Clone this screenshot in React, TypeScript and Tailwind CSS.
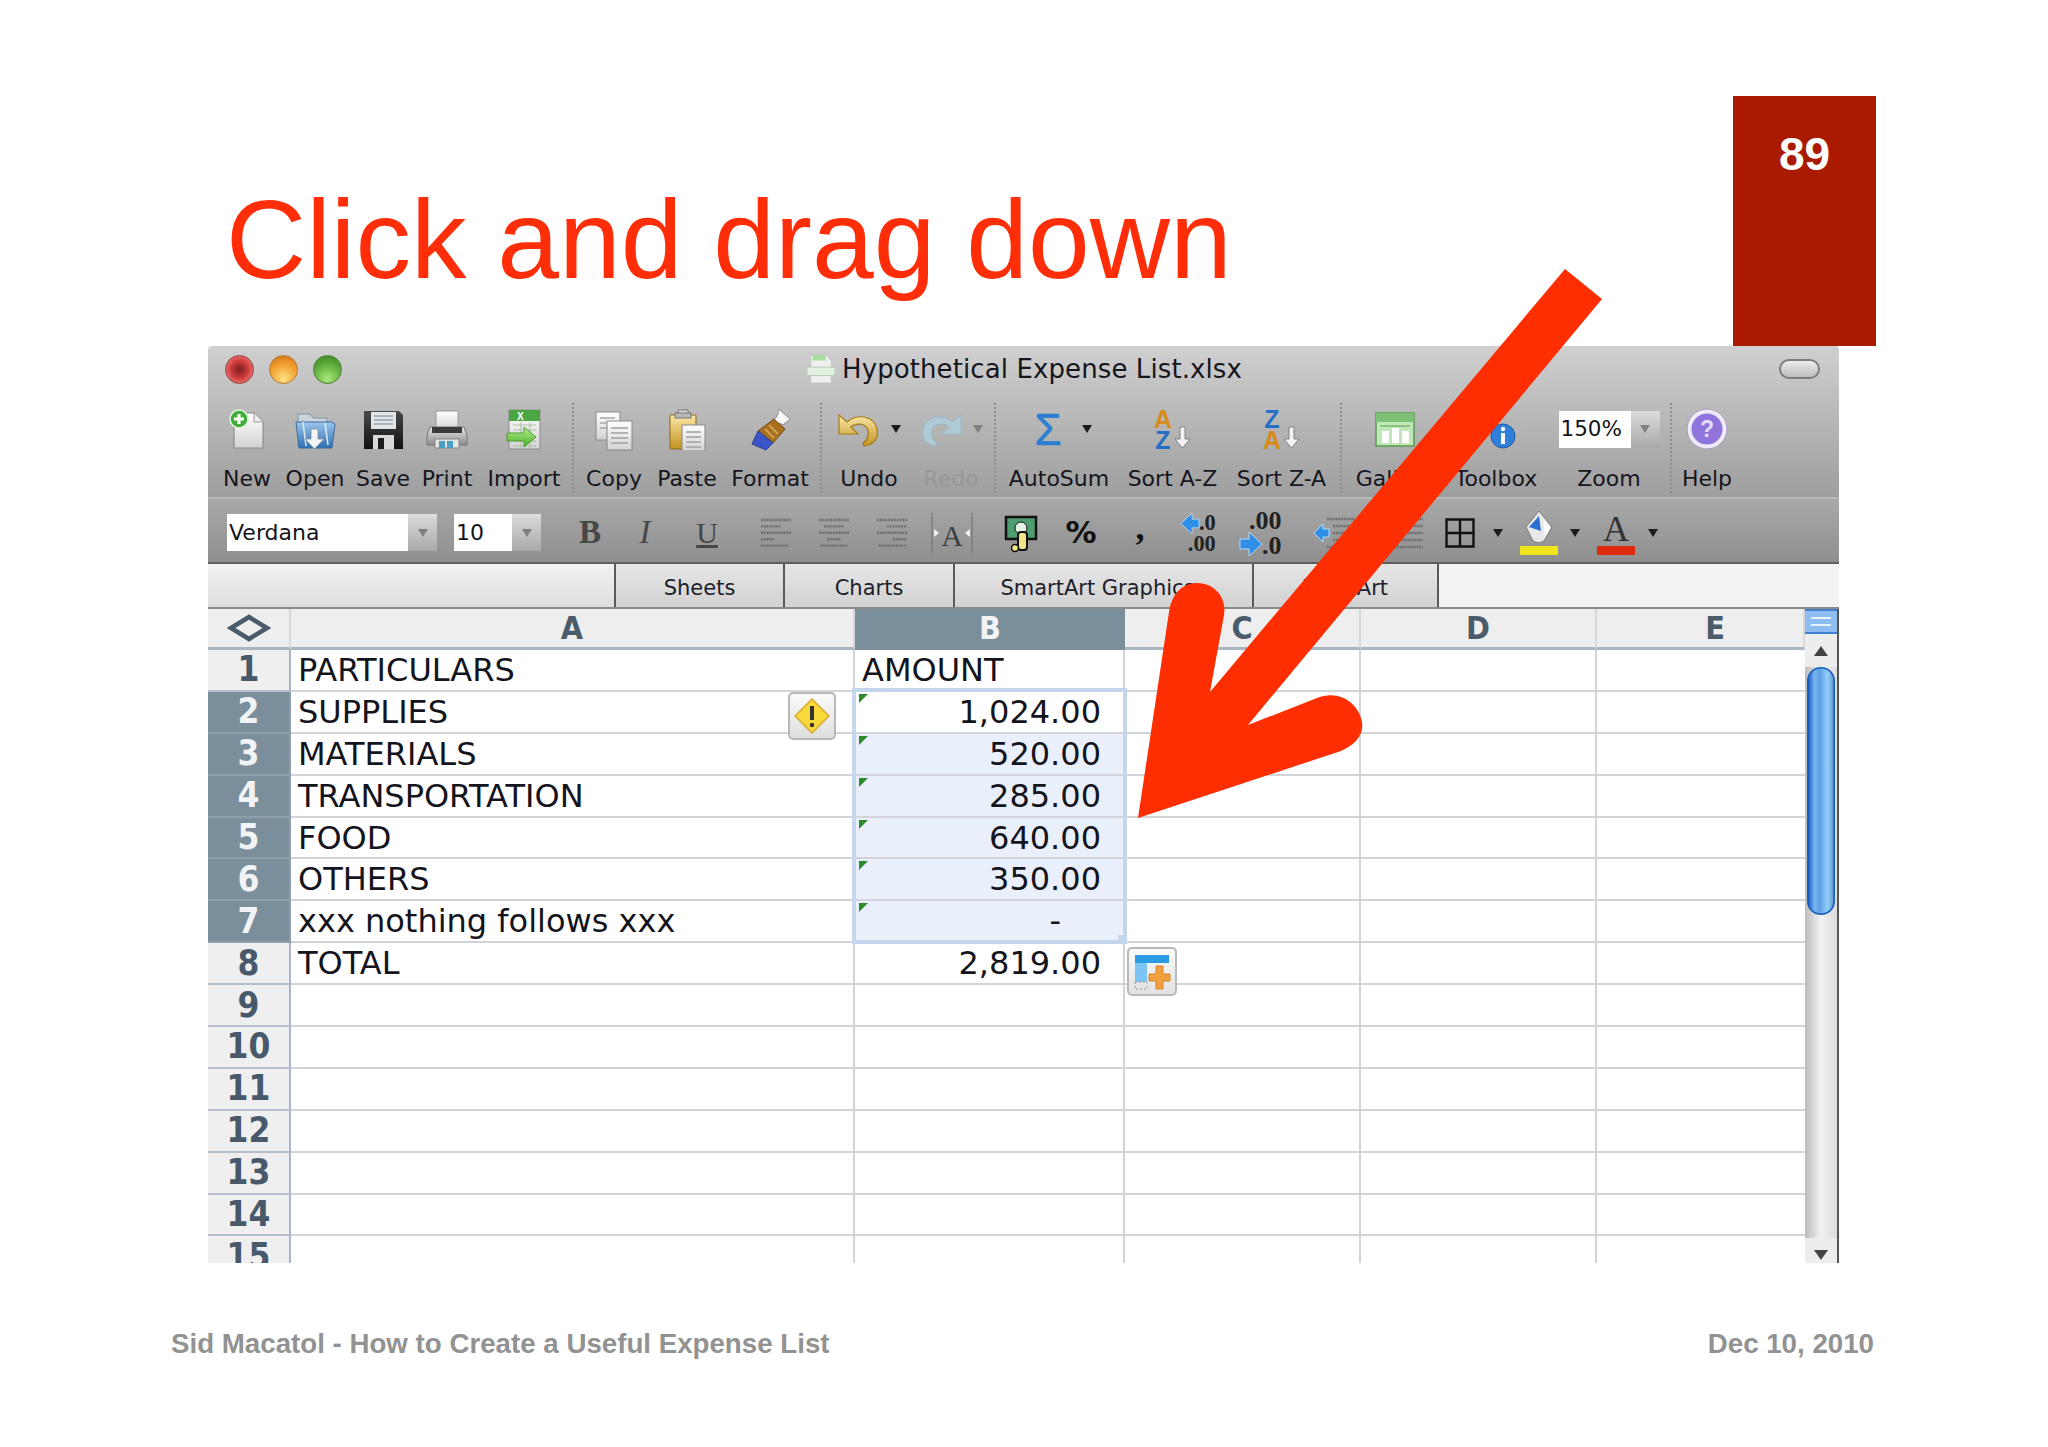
import * as React from "react";

function Ico({ children, className = "h-[44px] w-[44px]" }: { children: React.ReactNode; className?: string }) {
  return (
    <svg viewBox="0 0 44 44" className={className}>
      {children}
    </svg>
  );
}

function Defs() {
  return (
    <svg className="absolute h-0 w-0">
      <defs>
        <linearGradient id="page" x1="0" y1="0" x2="0" y2="1">
          <stop offset="0" stopColor="#ffffff" />
          <stop offset="1" stopColor="#d2d2d2" />
        </linearGradient>
        <linearGradient id="blue" x1="0" y1="0" x2="0" y2="1">
          <stop offset="0" stopColor="#9cc6ea" />
          <stop offset="1" stopColor="#2f6fb3" />
        </linearGradient>
        <linearGradient id="gold" x1="0" y1="0" x2="0" y2="1">
          <stop offset="0" stopColor="#fbe9a8" />
          <stop offset="1" stopColor="#c4921f" />
        </linearGradient>
        <linearGradient id="green" x1="0" y1="0" x2="0" y2="1">
          <stop offset="0" stopColor="#b6ee8a" />
          <stop offset="1" stopColor="#4bb02c" />
        </linearGradient>
        <linearGradient id="dark" x1="0" y1="0" x2="0" y2="1">
          <stop offset="0" stopColor="#4a4a4a" />
          <stop offset="1" stopColor="#111111" />
        </linearGradient>
        <linearGradient id="grey" x1="0" y1="0" x2="0" y2="1">
          <stop offset="0" stopColor="#e8e8e8" />
          <stop offset="1" stopColor="#8a8a8a" />
        </linearGradient>
        <linearGradient id="thumb" x1="0" y1="0" x2="1" y2="0">
          <stop offset="0" stopColor="#0f55c8" />
          <stop offset="0.25" stopColor="#79b5ee" />
          <stop offset="0.45" stopColor="#5ea0e6" />
          <stop offset="0.75" stopColor="#92d0fa" />
          <stop offset="1" stopColor="#5d8fc8" />
        </linearGradient>
      </defs>
    </svg>
  );
}

const NewIcon = () => (
  <Ico>
    <path d="M9 6h20l9 9v26H9z" fill="url(#page)" stroke="#8c8c8c" strokeWidth="1.2" />
    <path d="M29 6v9h9" fill="#ececec" stroke="#9a9a9a" />
    <circle cx="14" cy="12" r="9" fill="#3fae3a" stroke="#e6f6e0" strokeWidth="1.5" />
    <path d="M14 7v10M9 12h10" stroke="#fff" strokeWidth="3.2" />
  </Ico>
);

const OpenIcon = () => (
  <Ico>
    <path d="M5 7h12l3 4h14v28H5z" fill="#c9d4dd" stroke="#8494a3" />
    <path d="M3 15h36l3 2-3 24H6z" fill="url(#blue)" stroke="#3b6c9e" />
    <path d="M10 15l3 24M32 16l3 22" stroke="#dcecf8" strokeWidth="1.5" fill="none" />
    <path d="M18 22h7v10h6l-9.5 10L12 32h6z" fill="#f4f4f4" stroke="#7d8a96" strokeWidth="0.8" />
  </Ico>
);

const SaveIcon = () => (
  <Ico>
    <path d="M3 4h35l4 4v34H3z" fill="url(#dark)" />
    <rect x="10" y="5" width="25" height="17" fill="#e2e4e6" />
    <path d="M13 9h19M13 13h19M13 17h19" stroke="#9aa2aa" strokeWidth="1.5" />
    <rect x="12" y="28" width="21" height="14" fill="#d8d8d8" />
    <rect x="17" y="31" width="6" height="11" fill="#1b1b1b" />
  </Ico>
);

const PrintIcon = () => (
  <Ico>
    <rect x="11" y="4" width="22" height="20" fill="url(#page)" stroke="#9a9a9a" />
    <path d="M5 20h34l3 8v10H2V28z" fill="url(#grey)" stroke="#777" />
    <rect x="7" y="20" width="30" height="6" fill="#3a3a3a" />
    <rect x="10" y="32" width="24" height="9" fill="#e4e4e4" stroke="#888" />
    <rect x="14" y="34" width="6" height="7" fill="#4a9ec0" />
    <rect x="22" y="34" width="6" height="7" fill="#4a9ec0" />
  </Ico>
);

const ImportIcon = () => (
  <Ico>
    <rect x="7" y="3" width="31" height="39" fill="url(#page)" stroke="#8c8c8c" />
    <rect x="7" y="3" width="31" height="11" fill="#4ca644" />
    <text x="15" y="13" fontSize="10" fontWeight="700" fontFamily="Liberation Sans" fill="#fff">X</text>
    <path d="M11 18h23M11 23h23M11 34h23M11 39h23M19 15v27M28 15v27" stroke="#aebfa8" fill="none" />
    <path d="M5 26h17v-6l12 10-12 10v-6H5z" fill="url(#green)" stroke="#3f8f27" strokeWidth="0.8" />
  </Ico>
);

const CopyIcon = () => (
  <Ico>
    <rect x="4" y="5" width="24" height="28" fill="url(#page)" stroke="#888" />
    <path d="M8 11h15M8 16h15M8 21h15" stroke="#a8a8a8" strokeWidth="1.5" />
    <rect x="15" y="14" width="25" height="29" fill="url(#page)" stroke="#888" />
    <path d="M19 21h17M19 26h17M19 31h17M19 36h17" stroke="#a0a0a0" strokeWidth="1.5" />
  </Ico>
);

const PasteIcon = () => (
  <Ico>
    <rect x="5" y="8" width="26" height="34" rx="1" fill="url(#gold)" stroke="#8b6b1a" />
    <path d="M13 8h10V3h-10z" fill="#d8d8d8" stroke="#777" />
    <rect x="10" y="6" width="16" height="5" fill="#b9b9b9" stroke="#777" />
    <rect x="17" y="18" width="23" height="26" fill="url(#page)" stroke="#888" />
    <path d="M21 25h15M21 30h15M21 35h15M21 40h15" stroke="#a0a0a0" strokeWidth="1.5" />
  </Ico>
);

const BrushIcon = () => (
  <Ico>
    <path d="M31 2l11 10-7 6c-2-2-5-2-6 0l-4-5c3-1 5-5 6-11z" fill="#f6f6f6" stroke="#8a8a8a" />
    <path d="M26 12l11 10-12 14L10 24z" fill="#a8701f" stroke="#6e4a12" />
    <path d="M21 18l9 9M17 22l9 9" stroke="#d4a351" strokeWidth="1.8" />
    <path d="M10 24l15 12-7 7L4 37z" fill="#3a56c8" stroke="#28408f" />
  </Ico>
);

const UndoIcon = () => (
  <Ico>
    <path d="M2 8v19h19l-7-7c4-4 13-4 16 1 3 5 1 12-4 15l1 3c10-1 15-8 13-17C37 9 21 6 10 15z" fill="url(#gold)" stroke="#a67c18" strokeWidth="1.2" />
  </Ico>
);

const RedoIcon = () => (
  <Ico>
    <path d="M42 8v19H23l7-7c-4-4-13-4-16 1-3 5-1 12 4 15l-1 3C7 38 2 31 4 22 7 9 23 6 34 15z" fill="#aecad6" stroke="#9ab6c3" strokeWidth="1" />
  </Ico>
);

const SumIcon = () => (
  <svg viewBox="0 0 32 44" className="ml-[6px] h-[44px] w-[32px]">
    <text x="16" y="38" textAnchor="middle" fontSize="44" fontFamily="Liberation Sans" fill="#2c7fd0" stroke="#2c7fd0" strokeWidth="0.6">Σ</text>
  </svg>
);

const SortIcon = ({ flip }: { flip?: boolean }) => (
  <Ico>
    <text x="12" y="21" textAnchor="middle" fontSize="25" fontWeight="700" fontFamily="Liberation Sans" fill={flip ? "#2470c8" : "#d88a1a"}>{flip ? "Z" : "A"}</text>
    <text x="12" y="42" textAnchor="middle" fontSize="25" fontWeight="700" fontFamily="Liberation Sans" fill={flip ? "#d88a1a" : "#2470c8"}>{flip ? "A" : "Z"}</text>
    <path d="M29 20h5v12h5l-7.5 9L24 32h5z" fill="#f2f2f2" stroke="#6f6f6f" strokeWidth="0.8" />
  </Ico>
);

const GalleryIcon = () => (
  <Ico>
    <rect x="3" y="6" width="38" height="33" fill="#bfe7b7" stroke="#5a9c52" strokeWidth="1.5" />
    <rect x="3" y="6" width="38" height="9" fill="#7cc176" />
    <path d="M7 19h30" stroke="#5a9c52" />
    <rect x="9" y="24" width="7" height="12" fill="#fff" />
    <rect x="19" y="21" width="7" height="15" fill="#fff" />
    <rect x="29" y="24" width="7" height="12" fill="#fff" />
  </Ico>
);

const ToolboxIcon = () => (
  <Ico>
    <circle cx="29" cy="29" r="12" fill="#2f7fdb" stroke="#1d5da8" />
    <rect x="27" y="26" width="4" height="11" fill="#fff" />
    <circle cx="29" cy="22" r="2.2" fill="#fff" />
  </Ico>
);

const HelpIcon = () => (
  <Ico>
    <circle cx="22" cy="22" r="20" fill="#efeaf8" stroke="#a59cc0" />
    <circle cx="22" cy="22" r="15.5" fill="#8f74dc" />
    <text x="22" y="30" textAnchor="middle" fontSize="23" fontWeight="700" fontFamily="Liberation Sans" fill="#e4dcff">?</text>
  </Ico>
);

const Caret = ({ dim }: { dim?: boolean }) => (
  <svg viewBox="0 0 10 10" className="h-[10px] w-[10px]">
    <path d="M0 1h10L5 9z" fill={dim ? "#7f7f7f" : "#1c1c1c"} />
  </svg>
);

const Sep = ({ className }: { className: string }) => (
  <div className={`mt-[-4px] h-[90px] border-l-2 border-dotted border-[#8e8e8e] ${className}`} />
);

function Tool({ label, width, dim, children }: { label: string; width: string; dim?: boolean; children: React.ReactNode }) {
  return (
    <div className={`flex flex-col items-center ${width}`}>
      <div className="flex h-[44px] items-center">{children}</div>
      <span className={`mt-[14px] text-[22px] leading-[28px] whitespace-nowrap ${dim ? "text-[#979797]" : "text-[#16161e]"}`}>{label}</span>
    </div>
  );
}

function Select({ value, width, textSize = "text-[22px]" }: { value: string; width: string; textSize?: string }) {
  return (
    <div className={`flex h-[37px] items-stretch ${width}`}>
      <div className={`flex flex-1 items-center bg-white pl-[2px] ${textSize} text-[#14141c]`}>{value}</div>
      <div className="flex w-[29px] items-center justify-center bg-gradient-to-b from-[#dcdcdc] to-[#a9a9a9]">
        <Caret dim />
      </div>
    </div>
  );
}

const AlignIcon = ({ side }: { side: "l" | "c" | "r" }) => {
  const widths = [30, 20, 30, 14, 28];
  return (
    <svg viewBox="0 0 34 34" className="h-[34px] w-[34px]">
      {widths.map((w, i) => {
        const x = side === "l" ? 2 : side === "c" ? 17 - w / 2 : 32 - w;
        return <line key={i} x1={x} x2={x + w} y1={4 + i * 6.4} y2={4 + i * 6.4} stroke="#707070" strokeWidth="2.4" strokeDasharray="2 0.8" />;
      })}
    </svg>
  );
};

const Fmt = ({ width, children }: { width: string; children: React.ReactNode }) => (
  <div className={`flex items-center justify-center ${width}`}>{children}</div>
);

function FormatBar() {
  return (
    <div className="flex h-[67px] shrink-0 items-center border-t-2 border-b-2 border-t-[#b8b8b8] border-b-[#5f5f5f] bg-gradient-to-b from-[#a9a9a9] to-[#8f8f8f] pt-[4px] pl-[19px] font-['DejaVu_Sans']">
      <Select value="Verdana" width="w-[210px]" />
      <div className="w-[17px]" />
      <Select value="10" width="w-[87px]" />
      <div className="w-[19px]" />
      <Fmt width="w-[60px]"><span className="font-['Liberation_Serif'] text-[33px] font-bold text-[#464646]">B</span></Fmt>
      <Fmt width="w-[50px]"><span className="font-['Liberation_Serif'] text-[33px] italic text-[#464646]">I</span></Fmt>
      <Fmt width="w-[74px]"><span className="font-['Liberation_Serif'] text-[30px] text-[#464646] underline">U</span></Fmt>
      <Fmt width="w-[64px]"><AlignIcon side="l" /></Fmt>
      <Fmt width="w-[52px]"><AlignIcon side="c" /></Fmt>
      <Fmt width="w-[64px]"><AlignIcon side="r" /></Fmt>
      <Fmt width="w-[56px]">
        <svg viewBox="0 0 44 44" className="h-[44px] w-[44px]">
          <path d="M2 2v40M42 2v40" stroke="#6d6d6d" />
          <text x="22" y="35" textAnchor="middle" fontSize="30" fontFamily="Liberation Serif" fill="#3f3f3f">A</text>
          <path d="M9 22l-5-4v8zM35 22l5-4v8z" fill="#f0f0f0" />
        </svg>
      </Fmt>
      <Fmt width="w-[82px]">
        <svg viewBox="0 0 36 44" className="h-[44px] w-[36px]">
          <rect x="3" y="6" width="30" height="22" fill="#4f9c70" stroke="#111" strokeWidth="2.5" />
          <circle cx="18" cy="17" r="6" fill="#e4f4e4" stroke="#111" />
          <rect x="15" y="21" width="9" height="18" rx="3" fill="#efe488" stroke="#111" strokeWidth="2" />
          <circle cx="12" cy="37" r="3.5" fill="#efe488" stroke="#111" strokeWidth="1.5" />
        </svg>
      </Fmt>
      <Fmt width="w-[38px]"><span className="text-[31px] font-bold text-[#111]">%</span></Fmt>
      <Fmt width="w-[80px]"><span className="mt-[-12px] font-['Liberation_Serif'] text-[36px] leading-none font-bold text-[#111]">,</span></Fmt>
      <Fmt width="w-[38px]">
        <svg viewBox="0 0 44 48" className="h-[48px] w-[44px]">
          <path d="M1 13L14 1v7h8v10h-8v7z" fill="#2f8fe8" stroke="#cfe8ff" strokeWidth="0.8" />
          <text x="22" y="20" fontSize="26" fontWeight="700" fontFamily="Liberation Serif" fill="#222">.0</text>
          <text x="9" y="45" fontSize="26" fontWeight="700" fontFamily="Liberation Serif" fill="#222">.00</text>
        </svg>
      </Fmt>
      <Fmt width="w-[86px]">
        <svg viewBox="0 0 44 48" className="h-[48px] w-[44px]">
          <text x="10" y="20" fontSize="26" fontWeight="700" fontFamily="Liberation Serif" fill="#222">.00</text>
          <path d="M1 30h9v-7l13 12-13 12v-7H1z" fill="#2f8fe8" stroke="#cfe8ff" strokeWidth="0.8" />
          <text x="23" y="45" fontSize="26" fontWeight="700" fontFamily="Liberation Serif" fill="#222">.0</text>
        </svg>
      </Fmt>
      <Fmt width="w-[62px]">
        <svg viewBox="0 0 44 40" className="h-[40px] w-[44px]">
          <path d="M14 6h28M20 13h22M20 20h22M20 27h22M14 34h28" stroke="#707070" strokeWidth="2.4" strokeDasharray="2 0.8" />
          <path d="M1 20l9-9v5h6v8h-6v5z" fill="#2f8fe8" stroke="#cfe8ff" strokeWidth="0.8" />
        </svg>
      </Fmt>
      <Fmt width="w-[74px]">
        <svg viewBox="0 0 44 40" className="h-[40px] w-[44px]">
          <path d="M2 6h40M2 13h40M2 20h40M2 27h40M2 34h40" stroke="#707070" strokeWidth="2.4" strokeDasharray="2 0.8" />
        </svg>
      </Fmt>
      <Fmt width="w-[40px]">
        <svg viewBox="0 0 30 30" className="h-[30px] w-[30px]">
          <path d="M1.5 1.5h27v27h-27zM15 1.5v27M1.5 15h27" fill="none" stroke="#111" strokeWidth="2.4" />
        </svg>
      </Fmt>
      <Fmt width="w-[36px]"><Caret /></Fmt>
      <Fmt width="w-[46px]">
        <div className="flex flex-col items-center">
          <svg viewBox="0 0 36 36" className="h-[36px] w-[36px]">
            <path d="M18 1l13 16-8 14c-4 2-7 2-11 0L5 17z" fill="#e8e8e8" stroke="#777" />
            <path d="M18 6l-10 11 12 4z" fill="#2d6fd0" />
            <path d="M22 9l7 9-5 8z" fill="#fff" />
          </svg>
          <div className="h-[9px] w-[38px] bg-[#f0e41a]" />
        </div>
      </Fmt>
      <Fmt width="w-[26px]"><Caret /></Fmt>
      <Fmt width="w-[56px]">
        <div className="flex flex-col items-center">
          <span className="h-[36px] font-['Liberation_Serif'] text-[36px] leading-[38px] text-[#333]">A</span>
          <div className="h-[9px] w-[38px] bg-[#df2a12]" />
        </div>
      </Fmt>
      <Fmt width="w-[18px]"><Caret /></Fmt>
    </div>
  );
}

function TabStrip() {
  const tabs = [
    { label: "Sheets", width: "w-[169px]", extra: "" },
    { label: "Charts", width: "w-[170px]", extra: "" },
    { label: "SmartArt Graphics", width: "w-[299px]", extra: "pr-[12px]" },
    { label: "WordArt", width: "w-[185px]", extra: "" },
  ];
  return (
    <div className="flex h-[45px] shrink-0 border-b-2 border-b-[#8a8a8a] bg-gradient-to-b from-[#f2f2f2] to-[#dedede] font-['DejaVu_Sans']">
      <div className="w-[406px]" />
      {tabs.map((t) => (
        <div key={t.label} className={`flex items-center justify-center border-l-2 border-l-[#5a5a5a] bg-gradient-to-b from-[#e6e6e6] to-[#d2d2d2] pt-[5px] text-[21px] leading-none text-[#20202a] ${t.width} ${t.extra}`}>
          {t.label}
        </div>
      ))}
      <div className="flex-1 border-l-2 border-l-[#5a5a5a] bg-[#f3f3f3]" />
    </div>
  );
}

const cols = "grid grid-cols-[83px_564px_270px_236px_236px_208px]";

type Row = { n: number; a?: string; b?: string; sel?: boolean; first?: boolean; dash?: boolean };

const rows: Row[] = [
  { n: 1, a: "PARTICULARS", b: "AMOUNT" },
  { n: 2, a: "SUPPLIES", b: "1,024.00", sel: true, first: true },
  { n: 3, a: "MATERIALS", b: "520.00", sel: true },
  { n: 4, a: "TRANSPORTATION", b: "285.00", sel: true },
  { n: 5, a: "FOOD", b: "640.00", sel: true },
  { n: 6, a: "OTHERS", b: "350.00", sel: true },
  { n: 7, a: "xxx nothing follows xxx", b: "-", sel: true, dash: true },
  { n: 8, a: "TOTAL", b: "2,819.00" },
  { n: 9 }, { n: 10 }, { n: 11 }, { n: 12 }, { n: 13 }, { n: 14 }, { n: 15 },
];

function SheetRow({ r }: { r: Row }) {
  const cell = "border-r-2 border-b-2 border-[#d3d3da]";
  return (
    <div className={`${cols} h-[41.9px] font-['DejaVu_Sans'] text-[32px] leading-none text-[#14141c]`}>
      <div className={`flex items-center justify-center border-r-2 border-b-2 font-['DejaVu_Sans_Condensed'] text-[35px] font-bold ${r.sel ? "border-[#8c9dab] bg-[#7b8e9c] text-[#f1f3f4]" : "border-b-[#b5bfcb] border-r-[#a9b1cc] bg-[#efefef] text-[#47596a]"}`}>
        {r.n}
      </div>
      <div className={`flex items-center pl-[7px] whitespace-nowrap ${cell}`}>{r.a}</div>
      {r.n === 1 ? (
        <div className={`flex items-center pl-[7px] ${cell}`}>{r.b}</div>
      ) : (
        <div className={`relative flex items-center justify-end ${r.dash ? "pr-[62px]" : "pr-[22px]"} ${cell} ${r.sel && !r.first ? "bg-[#e9f0fb]" : ""}`}>
          {r.sel && <span className="absolute top-[2px] left-[4px] h-0 w-0 border-t-[9px] border-r-[9px] border-t-[#2c8a2c] border-r-transparent" />}
          {r.b}
        </div>
      )}
      <div className={cell} />
      <div className={cell} />
      <div className="border-b-2 border-[#d3d3da]" />
    </div>
  );
}

function ColumnHead() {
  const head = "flex items-center justify-center border-r-2 border-b-[3px] border-r-[#d6d6dc] border-b-[#a8b6c0] bg-[#eeeeef] text-[#4a5c6b]";
  return (
    <div className={`${cols} h-[41px] font-['DejaVu_Sans_Condensed'] text-[32px] leading-none font-bold`}>
      <div className={head}>
        <svg viewBox="0 0 44 28" className="h-[28px] w-[44px]">
          <path d="M22 3L40 14 22 25 4 14z" fill="none" stroke="#4a5c6b" strokeWidth="4.5" />
        </svg>
      </div>
      <div className={head}>A</div>
      <div className="flex items-center justify-center border-b-[3px] border-b-[#7b8e9c] bg-[#7b8e9c] text-[#f1f3f4]">B</div>
      <div className={head}>C</div>
      <div className={head}>D</div>
      <div className={`${head} pl-[30px]`}>E</div>
    </div>
  );
}

function ScrollBar() {
  return (
    <div className="flex w-[34px] flex-col items-center border-r-2 border-r-[#555555] bg-gradient-to-r from-[#bcbcbc] via-[#f2f2f2] to-[#dcdcdc]">
      <div className="flex h-[25px] w-full shrink-0 flex-col justify-center gap-[5px] border-y-2 border-[#3f7fd0] bg-[#8dbcf0] px-[6px]">
        <div className="h-[2px] bg-[#e9f2fb]" />
        <div className="h-[2px] bg-[#e9f2fb]" />
      </div>
      <div className="flex h-[33px] w-full shrink-0 items-center justify-center bg-[#ededed]">
        <svg viewBox="0 0 14 10" className="h-[10px] w-[14px]"><path d="M7 0l7 10H0z" fill="#444" /></svg>
      </div>
      <svg viewBox="0 0 28 248" className="h-[248px] w-[28px] shrink-0">
        <rect x="0.8" y="0.8" width="26.4" height="246.4" rx="13" fill="url(#thumb)" stroke="#1a5fc0" strokeWidth="1.6" />
      </svg>
      <div className="flex-1" />
      <div className="flex h-[25px] w-full shrink-0 items-start justify-center bg-[#ededed] pt-[12px]">
        <svg viewBox="0 0 14 10" className="h-[10px] w-[14px]"><path d="M0 0h14L7 10z" fill="#444" /></svg>
      </div>
    </div>
  );
}

function Sheet() {
  return (
    <div className="relative flex min-h-0 flex-1 bg-white">
      <div className="min-w-0 flex-1 overflow-hidden">
        <ColumnHead />
        {rows.map((r) => (
          <SheetRow key={r.n} r={r} />
        ))}
      </div>
      <ScrollBar />
      {/* selection outline */}
      <div className="absolute top-[79px] left-[644px] h-[256px] w-[275px] border-[4px] border-[#c5d6ec]" />
      <div className="absolute top-[326px] left-[910px] h-[9px] w-[9px] bg-[#c5d6ec]" />
      {/* warning smart tag */}
      <div className="absolute top-[83px] left-[580px] flex h-[48px] w-[48px] items-center justify-center rounded-[5px] border-2 border-[#b9b9b9] bg-gradient-to-b from-[#fafafa] to-[#dedede]">
        <svg viewBox="0 0 36 36" className="h-[36px] w-[36px]">
          <path d="M18 1l17 17-17 17L1 18z" fill="#f8d93c" stroke="#d8a92a" strokeWidth="1.5" />
          <path d="M18 8v14" stroke="#333" strokeWidth="4" />
          <circle cx="18" cy="27" r="2.2" fill="#333" />
        </svg>
      </div>
      {/* auto fill options */}
      <div className="absolute top-[338px] left-[919px] flex h-[49px] w-[50px] items-center justify-center rounded-[5px] border-2 border-[#b9b9b9] bg-gradient-to-b from-[#fafafa] to-[#e2e2e2]">
        <svg viewBox="0 0 38 38" className="h-[38px] w-[38px]">
          <rect x="2" y="2" width="34" height="8" fill="#2c9be4" />
          <rect x="2" y="10" width="12" height="19" fill="#7cc4f3" />
          <path d="M2 29h12v7H2z" fill="none" stroke="#9a9a9a" strokeDasharray="2 2" />
          <path d="M23 13h7v8h7v7h-7v8h-7v-8h-7v-7h7z" fill="#f0a040" stroke="#d9822b" />
        </svg>
      </div>
    </div>
  );
}

function Toolbar() {
  return (
    <div className="flex h-[151px] shrink-0 flex-col bg-gradient-to-b from-[#d0d0d0] to-[#9e9e9e] font-['DejaVu_Sans']">
      <div className="flex h-[44px] shrink-0 items-center pt-[2px] pl-[17px]">
        <div className="flex gap-[15px]">
          <span className="h-[29px] w-[29px] rounded-full border border-[#9a3b3b] bg-[radial-gradient(circle,#7a2020_0%,#cf3a3a_45%,#f5a0a0_100%)]" />
          <span className="h-[29px] w-[29px] rounded-full border border-[#b87a30] bg-[radial-gradient(circle_at_50%_85%,#ffe080_0%,#f09a2a_60%,#c9701a_100%)]" />
          <span className="h-[29px] w-[29px] rounded-full border border-[#4a7f33] bg-[radial-gradient(circle_at_50%_85%,#a9e87a_0%,#5aa838_60%,#3d7f27_100%)]" />
        </div>
        <svg viewBox="0 0 34 34" className="ml-[463px] h-[32px] w-[32px]">
          <path d="M6 2h16l6 6v24H6z" fill="#f0f0f0" stroke="#c0c0c0" />
          <rect x="8" y="2" width="14" height="6" fill="#a8dca0" />
          <rect x="2" y="15" width="30" height="9" rx="2" fill="#e2f0e0" stroke="#b5c8b5" />
        </svg>
        <span className="ml-[5px] text-[26px] tracking-[0.1px] text-[#16161e]">Hypothetical Expense List.xlsx</span>
        <div className="mr-[19px] ml-auto h-[20px] w-[41px] rounded-full border-2 border-[#7c7c7c] bg-gradient-to-b from-[#ededed] to-[#bdbdbd]" />
      </div>
      <div className="flex items-start pt-[17px] pl-[7px]">
        <Tool label="New" width="w-[64px]"><NewIcon /></Tool>
        <Tool label="Open" width="w-[72px]"><OpenIcon /></Tool>
        <Tool label="Save" width="w-[64px]"><SaveIcon /></Tool>
        <Tool label="Print" width="w-[64px]"><PrintIcon /></Tool>
        <Tool label="Import" width="w-[90px]"><ImportIcon /></Tool>
        <Sep className="mx-[3px]" />
        <Tool label="Copy" width="w-[74px]"><CopyIcon /></Tool>
        <Tool label="Paste" width="w-[72px]"><PasteIcon /></Tool>
        <Tool label="Format" width="w-[94px]"><BrushIcon /></Tool>
        <Sep className="mx-[3px]" />
        <Tool label="Undo" width="w-[88px]"><UndoIcon /><span className="ml-[10px]"><Caret /></span></Tool>
        <Tool label="Redo" width="w-[76px]" dim><RedoIcon /><span className="ml-[10px]"><Caret dim /></span></Tool>
        <Sep className="mx-[5px]" />
        <Tool label="AutoSum" width="w-[116px]"><SumIcon /><span className="ml-[18px]"><Caret /></span></Tool>
        <Tool label="Sort A-Z" width="w-[111px]"><SortIcon /></Tool>
        <Tool label="Sort Z-A" width="w-[107px]"><SortIcon flip /></Tool>
        <Sep className="mx-[5px]" />
        <Tool label="Gallery" width="w-[96px]"><GalleryIcon /></Tool>
        <Tool label="Toolbox" width="w-[106px]"><ToolboxIcon /></Tool>
        <Tool label="Zoom" width="w-[120px]">
          <Select value="150%" width="w-[101px]" textSize="text-[21.5px]" />
        </Tool>
        <Sep className="mx-[1px]" />
        <Tool label="Help" width="w-[68px]"><HelpIcon /></Tool>
      </div>
    </div>
  );
}

export default function App() {
  return (
    <div className="relative flex h-[1447px] w-[2048px] flex-col overflow-hidden bg-white">
      <Defs />
      <header className="flex h-[346px] shrink-0 justify-between pt-[96px] pr-[172px] pl-[226px]">
        <h1 className="pt-[89px] font-['Liberation_Sans'] text-[111px] leading-[110px] font-normal whitespace-nowrap text-[#ff2d08]">Click and drag down</h1>
        <div className="flex h-[250px] w-[143px] justify-center bg-[#aa1a00] pt-[30px] font-['Liberation_Sans'] text-[46px] leading-[56px] font-bold text-white">89</div>
      </header>
      <div className="ml-[208px] flex h-[917px] w-[1631px] shrink-0 flex-col overflow-hidden rounded-t-[4px]">
        <Toolbar />
        <FormatBar />
        <TabStrip />
        <Sheet />
      </div>
      <footer className="flex justify-between pt-[65px] pr-[174px] pl-[171px] font-['Liberation_Sans'] text-[27.7px] leading-[32px] font-bold text-[#929292]">
        <span>Sid Macatol - How to Create a Useful Expense List</span>
        <span>Dec 10, 2010</span>
      </footer>
      {/* red arrow drawn over the window */}
      <svg viewBox="0 0 2048 1447" className="pointer-events-none absolute inset-0 h-[1447px] w-[2048px]">
        <path
          d="M1138 818L1169 612C1172 592 1184 583 1197 583C1214 583 1227 597 1224 615L1210 692L1565 269L1602 299L1248 725L1317 698C1340 689 1359 704 1362 722C1364 735 1355 745 1341 751Z"
          fill="#ff2e00"
        />
      </svg>
    </div>
  );
}
